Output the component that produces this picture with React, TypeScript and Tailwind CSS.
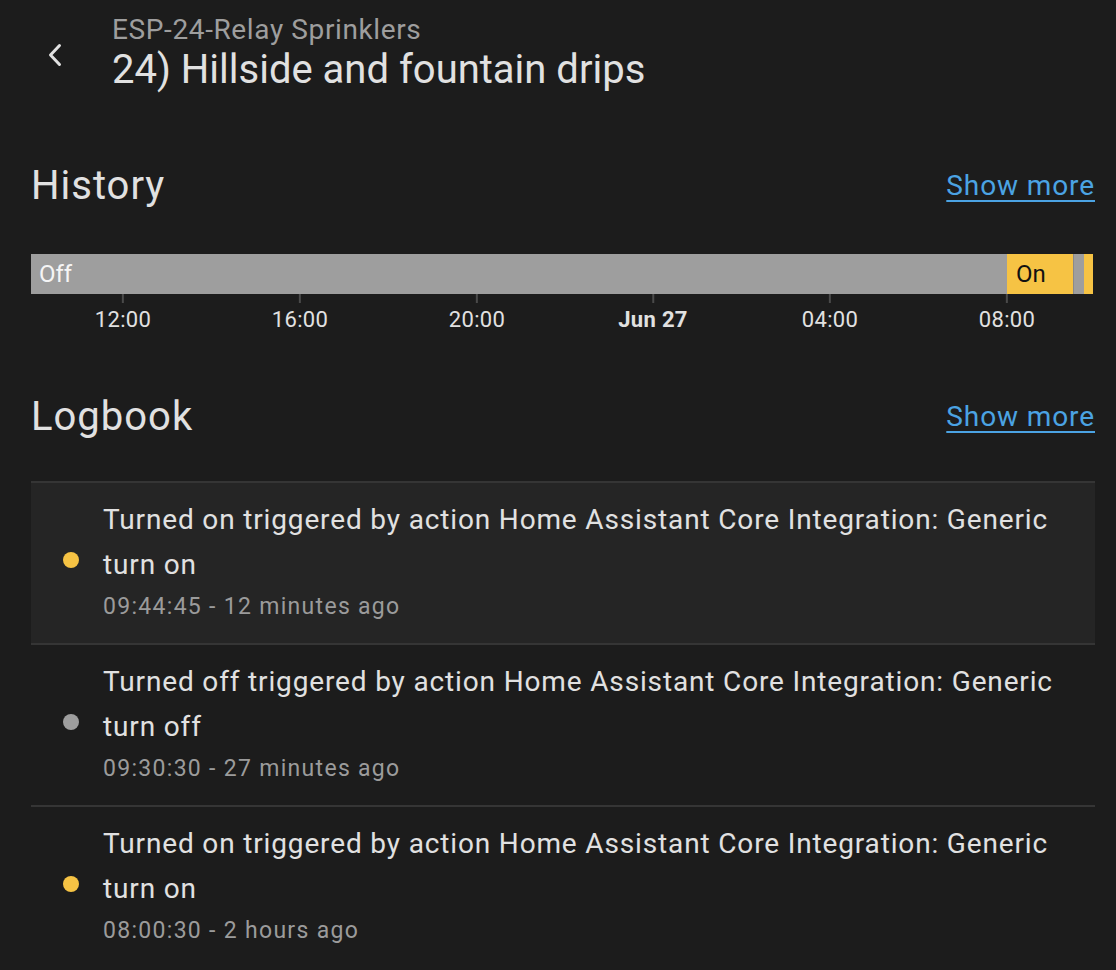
const ENTRIES = [
  {
    message: 'Turned on triggered by action Home Assistant Core Integration: Generic turn on',
    time: '09:44:45 - 12 minutes ago',
    on: true,
    highlighted: true,
  },
  {
    message: 'Turned off triggered by action Home Assistant Core Integration: Generic turn off',
    time: '09:30:30 - 27 minutes ago',
    on: false,
    highlighted: false,
  },
  {
    message: 'Turned on triggered by action Home Assistant Core Integration: Generic turn on',
    time: '08:00:30 - 2 hours ago',
    on: true,
    highlighted: false,
  },
];

// tick offsets in px from the bar's left edge
const TICKS = [
  { label: '12:00', x: 92 },
  { label: '16:00', x: 269 },
  { label: '20:00', x: 446 },
  { label: 'Jun 27', x: 622, bold: true },
  { label: '04:00', x: 799 },
  { label: '08:00', x: 976 },
];

function SectionHeader({ title }: { title: string }) {
  return (
    <div className="flex items-center justify-between">
      <h2 className="text-[40px] leading-[48px] tracking-[1px] text-[#e1e1e1]">{title}</h2>
      <a href="#" className="text-[28px] leading-[34px] tracking-[0.9px] text-[#4ba3e3] underline underline-offset-[5px] decoration-[2px]">
        Show more
      </a>
    </div>
  );
}

export default function App() {
  return (
    <div className="min-h-screen bg-[#1c1c1c] font-['Roboto',sans-serif] text-[#e1e1e1] pl-[31px] pr-[21px]">
      {/* Header */}
      <div className="flex items-center pt-[15px]">
        <button className="w-[48px] h-[48px] flex items-center justify-center text-[#e1e1e1]">
          <svg width="16" height="24" viewBox="0 0 16 24" fill="none">
            <polyline points="12.5,2.5 3.5,12 12.5,21.5" stroke="currentColor" strokeWidth="3" strokeLinecap="round" strokeLinejoin="round" />
          </svg>
        </button>
        <div className="ml-[33px]">
          <div className="text-[28px] leading-[30px] tracking-[0.62px] text-[#9e9e9e]">ESP-24-Relay Sprinklers</div>
          <div className="text-[40px] leading-[48px] mt-[1px] text-[#e1e1e1]">24) Hillside and fountain drips</div>
        </div>
      </div>

      {/* History */}
      <div className="mt-[68px]">
        <SectionHeader title="History" />
        <div className="mt-[44px] w-[1062px]">
          <div className="flex h-[40px] text-[24px] leading-[40px]">
            <div className="w-[976px] bg-[#9e9e9e] pl-[8px] text-[#f5f5f5]">Off</div>
            <div className="w-[66px] bg-[#f6c344] pl-[9px] text-[#111]">On</div>
            <div className="w-[11px] bg-[#9e9e9e] border-l border-[#8a8a8a]" />
            <div className="w-[9px] bg-[#f6c344]" />
          </div>
          <div className="relative h-[39px]">
            {TICKS.map((t) => (
              <div key={t.label} className="absolute top-0 flex flex-col items-center -translate-x-1/2" style={{ left: t.x }}>
                <div className="w-[2px] h-[9px] bg-[#4a4a4a]" />
                <div className={`mt-[4px] text-[22px] leading-[26px] tracking-[0.3px] whitespace-nowrap text-[#e1e1e1] ${t.bold ? 'font-bold' : ''}`}>
                  {t.label}
                </div>
              </div>
            ))}
          </div>
        </div>
      </div>

      {/* Logbook */}
      <div className="mt-[60px]">
        <SectionHeader title="Logbook" />
        <div className="mt-[40px]">
          {ENTRIES.map((e, i) => (
            <div
              key={i}
              className={`flex items-center gap-[24px] border-t-2 border-[#353535] pl-[32px] pt-[14px] pb-[21px] ${e.highlighted ? 'bg-[#252525]' : ''}`}
            >
              <span className={`shrink-0 w-[16px] h-[16px] rounded-full ${e.on ? 'bg-[#f6c344]' : 'bg-[#9e9e9e]'}`} />
              <div className="pr-[30px]">
                <div className="text-[28px] leading-[45px] tracking-[0.85px] text-[#e1e1e1]">{e.message}</div>
                <div className="mt-[5px] text-[23px] leading-[30px] tracking-[1.3px] text-[#9b9b9b]">{e.time}</div>
              </div>
            </div>
          ))}
        </div>
      </div>
    </div>
  );
}
